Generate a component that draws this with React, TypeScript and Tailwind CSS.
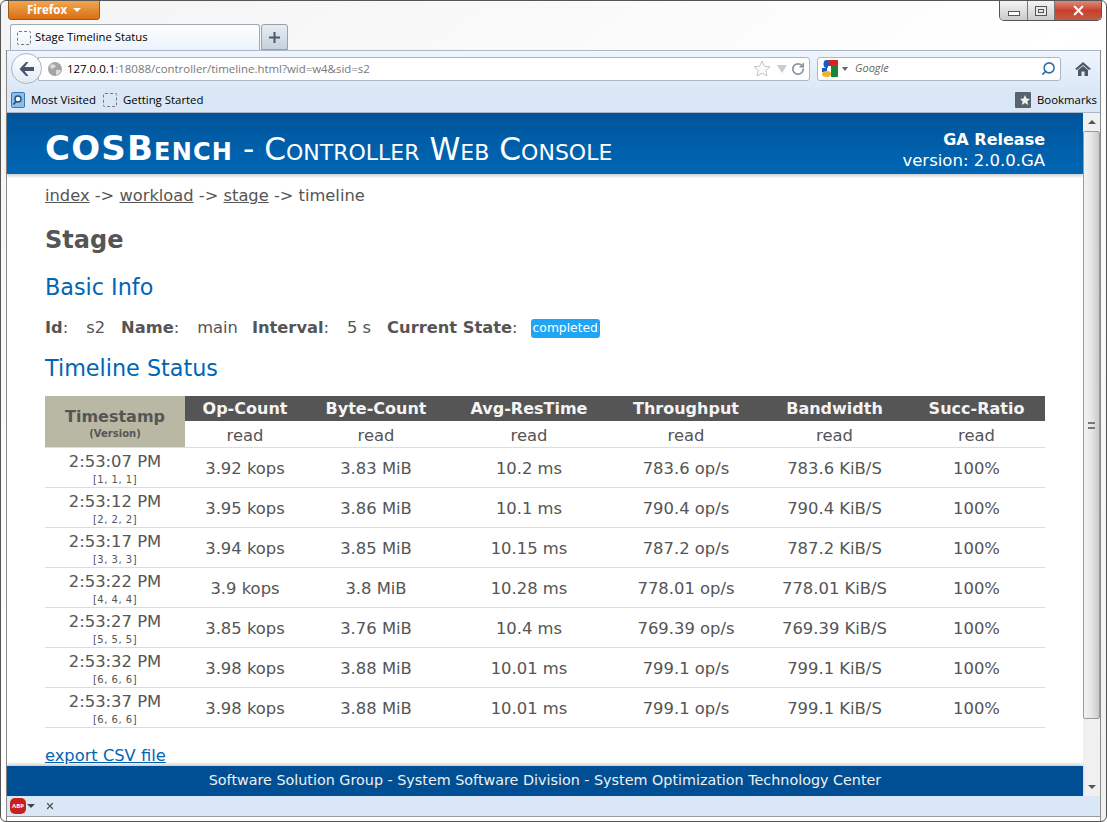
import { RotateCw, Search, X } from "lucide-react";

const chromeFont = "font-['Open_Sans','Noto_Sans',sans-serif]";
const pageFont = "font-['DejaVu_Sans','Liberation_Sans',sans-serif]";

const columns = [
  { name: "Op-Count", width: "w-[120px]" },
  { name: "Byte-Count", width: "w-[142px]" },
  { name: "Avg-ResTime", width: "w-[164px]" },
  { name: "Throughput", width: "w-[150px]" },
  { name: "Bandwidth", width: "w-[147px]" },
  { name: "Succ-Ratio", width: "w-[137px]" },
];

const rows = [
  ["2:53:07 PM", "[1, 1, 1]", "3.92 kops", "3.83 MiB", "10.2 ms", "783.6 op/s", "783.6 KiB/S", "100%"],
  ["2:53:12 PM", "[2, 2, 2]", "3.95 kops", "3.86 MiB", "10.1 ms", "790.4 op/s", "790.4 KiB/S", "100%"],
  ["2:53:17 PM", "[3, 3, 3]", "3.94 kops", "3.85 MiB", "10.15 ms", "787.2 op/s", "787.2 KiB/S", "100%"],
  ["2:53:22 PM", "[4, 4, 4]", "3.9 kops", "3.8 MiB", "10.28 ms", "778.01 op/s", "778.01 KiB/S", "100%"],
  ["2:53:27 PM", "[5, 5, 5]", "3.85 kops", "3.76 MiB", "10.4 ms", "769.39 op/s", "769.39 KiB/S", "100%"],
  ["2:53:32 PM", "[6, 6, 6]", "3.98 kops", "3.88 MiB", "10.01 ms", "799.1 op/s", "799.1 KiB/S", "100%"],
  ["2:53:37 PM", "[6, 6, 6]", "3.98 kops", "3.88 MiB", "10.01 ms", "799.1 op/s", "799.1 KiB/S", "100%"],
];

function DashedIcon() {
  return <span className="block h-[14px] w-[14px] rounded-[2px] border border-dashed border-[#777]" />;
}

function WindowButtons() {
  return (
    <div className="mr-[4px] flex h-[20px] overflow-hidden rounded-b-[5px] border border-t-0 border-[#555]">
      <div className="flex w-[28px] items-end justify-center border-r border-[#777] bg-gradient-to-b from-[#f4f4f4] to-[#c9cbce] pb-[4px]">
        <span className="block h-[5px] w-[12px] border border-[#555] bg-white" />
      </div>
      <div className="flex w-[27px] items-center justify-center border-r border-[#777] bg-gradient-to-b from-[#f4f4f4] to-[#c9cbce]">
        <span className="block h-[10px] w-[12px] border border-[#555] bg-[#e8e8e8] p-[2px]">
          <span className="block h-full w-full border border-[#555]" />
        </span>
      </div>
      <div className="flex w-[46px] items-center justify-center bg-gradient-to-b from-[#dc8a7c] via-[#c8402c] to-[#c25a48]">
        <X size={15} strokeWidth={3.5} className="text-white" />
      </div>
    </div>
  );
}

function BackButton() {
  return (
    <div className="z-10 -ml-[1px] flex h-[31px] w-[31px] shrink-0 items-center justify-center rounded-full border border-[#a8b4c2] bg-gradient-to-b from-white to-[#e4ebf3]">
      <svg width="18" height="16" viewBox="0 0 18 16">
        <path d="M8 1 L1.5 8 L8 15 L10.5 15 L6.5 10 L16 10 L16 6 L6.5 6 L10.5 1 Z" fill="#47546a" />
      </svg>
    </div>
  );
}

function GoogleIcon() {
  return (
    <svg width="16" height="17" viewBox="0 0 16 17">
      <rect x="5" y="0" width="11" height="6" fill="#e0201c" />
      <rect x="9" y="5" width="7" height="12" fill="#17853a" />
      <ellipse cx="4.5" cy="4" rx="3" ry="4" fill="#1a5fc0" />
      <rect x="0" y="8" width="5" height="4" fill="#1a5fc0" />
      <ellipse cx="4.5" cy="14" rx="4.5" ry="3" fill="#f0b41c" />
      <rect x="6" y="6" width="3" height="5" fill="#fff" />
    </svg>
  );
}

function Toolbar() {
  return (
    <div className={`flex h-[37px] items-center bg-gradient-to-b from-[#eef5fd] to-[#dde9f7] pb-[2px] pl-[5px] ${chromeFont}`}>
      <BackButton />
      <div className="-ml-[4px] flex h-[24px] w-[772px] items-center rounded-r-[3px] border border-[#a9b7c9] bg-white pl-[8px] pr-[4px]">
        <svg width="16" height="16" viewBox="0 0 16 16" className="shrink-0">
          <circle cx="8" cy="8" r="7" fill="#a5a5a5" />
          <path d="M3 4 Q7 2 9 5 Q7 8 4 8 Z M9 9 Q13 8 14 10 Q12 14 9 14 Z" fill="#dcdcdc" />
        </svg>
        <span className="ml-[4px] text-[11.45px] text-[#777]">
          <span className="text-black">127.0.0.1</span>:18088/controller/timeline.html?wid=w4&amp;sid=s2
        </span>
        <div className="ml-auto flex items-center gap-[4px]">
          <svg width="18" height="17" viewBox="0 0 18 17">
            <path d="M9 1 L11.4 6.2 L17 6.8 L12.8 10.5 L14 16 L9 13.2 L4 16 L5.2 10.5 L1 6.8 L6.6 6.2 Z" fill="#fafafa" stroke="#c4c4c4" />
          </svg>
          <svg width="10" height="8" viewBox="0 0 10 8" className="ml-[2px]">
            <path d="M0 0 H10 L5 8 Z" fill="#c5ccd4" />
          </svg>
          <RotateCw size={14} strokeWidth={3} className="text-[#8c979f]" />
        </div>
      </div>
      <div className="ml-[7px] flex h-[24px] w-[244px] items-center rounded-[3px] border border-[#a9b7c9] bg-white px-[4px]">
        <GoogleIcon />
        <svg width="6" height="4" viewBox="0 0 6 4" className="ml-[4px]">
          <path d="M0 0 H6 L3 4 Z" fill="#666" />
        </svg>
        <span className="ml-[7px] text-[11px] italic text-[#666]">Google</span>
        <Search size={15} strokeWidth={2.5} className="ml-auto -scale-x-100 text-[#2f6fa8]" />
      </div>
      <svg width="16" height="14" viewBox="0 0 16 14" className="ml-[14px]">
        <path d="M8 0 L16 7 L14 8 L8 3 L2 8 L0 7 Z M3 8 L8 4 L13 8 V14 H9.5 V9.5 H6.5 V14 H3 Z" fill="#4b5966" />
      </svg>
    </div>
  );
}

function BookmarksBar() {
  return (
    <div className={`flex h-[25px] items-center border-b border-[#a9b7c9] bg-[#d9e7f7] pl-[4px] pr-[3px] text-[11.4px] text-black ${chromeFont}`}>
      <svg width="14" height="16" viewBox="0 0 14 16">
        <rect x="0.5" y="0.5" width="13" height="15" rx="1" fill="#8fbce6" stroke="#3a78b0" />
        <circle cx="7" cy="7" r="3" fill="#fff" stroke="#1f4f80" strokeWidth="1.4" />
        <path d="M5 9.5 L2.5 12.5" stroke="#1f4f80" strokeWidth="1.6" />
      </svg>
      <span className="ml-[6px]">Most Visited</span>
      <span className="ml-[7px]">
        <DashedIcon />
      </span>
      <span className="ml-[6px]">Getting Started</span>
      <svg width="16" height="16" viewBox="0 0 16 16" className="ml-auto">
        <rect width="16" height="16" rx="1" fill="#59636e" />
        <path d="M10 3 L11.5 6.5 L15 7 L12.4 9.3 L13.2 13 L10 11 L6.8 13 L7.6 9.3 L5 7 L8.5 6.5 Z" fill="#f2f2f2" />
      </svg>
      <span className="ml-[6px]">Bookmarks</span>
    </div>
  );
}

function Scrollbar() {
  return (
    <div className="flex w-[17px] shrink-0 flex-col bg-[#f0f0f0]">
      <div className="flex h-[18px] items-center justify-center">
        <span className="block h-0 w-0 border-x-[4px] border-b-[4px] border-x-transparent border-b-[#555]" />
      </div>
      <div className="flex h-[588px] items-center justify-center rounded-[2px] border border-[#9a9a9a] bg-gradient-to-r from-[#f2f2f2] via-[#e6e6e6] to-[#c9c9c9]">
        <span className="block h-[7px] w-[7px] border-y-2 border-[#777]" />
      </div>
      <div className="mt-auto flex h-[18px] items-center justify-center">
        <span className="block h-0 w-0 border-x-[4px] border-t-[4px] border-x-transparent border-t-[#555]" />
      </div>
    </div>
  );
}

function Field({ label, value, gap }: { label: string; value: string; gap: string }) {
  return (
    <span className={`${gap} whitespace-nowrap`}>
      <b className="font-bold">{label}</b>:<span className="ml-[18px]">{value}</span>
    </span>
  );
}

function TimelineTable() {
  return (
    <table className="w-[1000px] table-fixed border-collapse text-center text-[16.4px] leading-[20px] text-[#555]">
      <thead>
        <tr className="h-[25px]">
          <th rowSpan={2} className="w-[140px] bg-[#b8b8a4] p-0 pt-[5px] align-middle font-bold leading-none">
            <div className="text-[16px]">Timestamp</div>
            <div className="mt-[4px] text-[10px]">(Version)</div>
          </th>
          {columns.map((col) => (
            <th key={col.name} className={`${col.width} bg-[#555] p-0 text-[16px] font-bold text-[#f4f4f4]`}>
              {col.name}
            </th>
          ))}
        </tr>
        <tr className="h-[26px] border-b border-[#ddd]">
          {columns.map((col) => (
            <td key={col.name} className="p-0 pt-[4px]">read</td>
          ))}
        </tr>
      </thead>
      <tbody>
        {rows.map((row) => (
          <tr key={row[0] + row[2]} className="h-[40px] border-b border-[#ddd]">
            <td className="p-0 pt-[5px] leading-none">
              <div className="text-[16.4px] leading-[18px]">{row[0]}</div>
              <div className="mt-[3px] text-[10px] leading-[12px] tracking-[0.5px]">{row[1]}</div>
            </td>
            {row.slice(2).map((cell, i) => (
              <td key={i} className="p-0 pt-[3px]">{cell}</td>
            ))}
          </tr>
        ))}
      </tbody>
    </table>
  );
}

function Page() {
  return (
    <div className={`flex min-w-0 flex-1 flex-col bg-white text-[#555] ${pageFont}`}>
      <header className="flex h-[61px] shrink-0 items-center justify-between bg-gradient-to-b from-[#00559b] to-[#0067b5] px-[38px] text-white shadow-[0_2px_3px_rgba(0,0,0,0.2)]">
        <h1 className="whitespace-nowrap pt-[10px] text-[31.25px] font-normal [font-variant:small-caps]">
          <b className="text-[34px] font-bold tracking-[1.2px]">COSBench</b> - Controller Web Console
        </h1>
        <div className="pt-[12px] text-right leading-[21px]">
          <div className="text-[16px] font-bold">GA Release</div>
          <div className="text-[16.5px]">version: 2.0.0.GA</div>
        </div>
      </header>

      <main className="min-h-0 flex-1 overflow-hidden px-[38px]">
        <p className="mt-[11px] h-[22px] text-[16.3px] leading-[22px]">
          <a className="underline">index</a> -&gt; <a className="underline">workload</a> -&gt;{" "}
          <a className="underline">stage</a> -&gt; timeline
        </p>
        <h2 className="mt-[18px] text-[24px] font-bold leading-[30px]">Stage</h2>
        <h3 className="mt-[17px] text-[22.3px] leading-[30px] text-[#0066b3]">Basic Info</h3>
        <div className="mt-[16px] flex h-[20px] items-center text-[16.3px]">
          <Field label="Id" value="s2" gap="" />
          <Field label="Name" value="main" gap="ml-[16px]" />
          <Field label="Interval" value="5 s" gap="ml-[14px]" />
          <Field label="Current State" value="" gap="ml-[16px]" />
          <span className="-ml-[5px] rounded-[3px] bg-[#1fa5f3] px-[2px] text-[12.3px] leading-[19px] text-white">completed</span>
        </div>
        <h3 className="mt-[15px] text-[22.3px] leading-[30px] text-[#0066b3]">Timeline Status</h3>
        <div className="mt-[13px]">
          <TimelineTable />
        </div>
        <a className="mt-[18px] block text-[16.3px] leading-[20px] text-[#0066b3] underline">export CSV file</a>
      </main>

      <footer className="z-10 flex h-[30px] shrink-0 items-center justify-center bg-[#004f94] text-[14.33px] text-[#f0f0f0] shadow-[0_-2px_3px_rgba(0,0,0,0.2)]">
        Software Solution Group - System Software Division - System Optimization Technology Center
      </footer>
    </div>
  );
}

export default function App() {
  return (
    <div className="flex h-[822px] w-[1107px] flex-col overflow-hidden rounded-[6px] border border-[#555] bg-gradient-to-br from-[#f4f4f4] via-white to-[#f0f0f0]">
      <div className="flex h-[23px] shrink-0 items-start justify-between pl-[7px]">
        <div className={`-mt-[1px] flex h-[20px] w-[92px] items-center justify-center gap-[6px] rounded-b-[3px] border border-[#9a5a10] bg-gradient-to-b from-[#f1a64c] to-[#d86f0e] text-[11.5px] font-bold text-white ${chromeFont}`}>
          Firefox
          <span className="block h-0 w-0 border-x-[4px] border-t-[4px] border-x-transparent border-t-white" />
        </div>
        <WindowButtons />
      </div>

      <div className={`flex h-[26px] shrink-0 items-end gap-[1px] pl-[9px] ${chromeFont}`}>
        <div className="z-10 flex h-[26px] w-[250px] items-center rounded-t-[3px] border border-b-0 border-[#a3a9b2] bg-gradient-to-b from-white to-[#eaf3fc] pl-[6px] text-[11.3px] text-black">
          <DashedIcon />
          <span className="ml-[4px]">Stage Timeline Status</span>
        </div>
        <div className="flex h-[26px] w-[27px] items-center justify-center rounded-t-[3px] border border-[#9aa0a8] bg-gradient-to-b from-[#e8edf3] to-[#c6d0dc] text-[#3f4d5f]">
          <svg width="11" height="11" viewBox="0 0 11 11">
            <path d="M4.5 0 H6.5 V4.5 H11 V6.5 H6.5 V11 H4.5 V6.5 H0 V4.5 H4.5 Z" fill="#4a586a" />
          </svg>
        </div>
      </div>

      <div className="mx-[5px] flex min-h-0 flex-1 flex-col border-x border-[#8a8a8a]">
        <div className="border-t border-[#a9b7c9]">
          <Toolbar />
        </div>
        <BookmarksBar />
        <div className="flex min-h-0 flex-1">
          <Page />
          <Scrollbar />
        </div>
        <div className={`flex h-[21px] shrink-0 items-center gap-[10px] border-b border-[#9a9a9a] bg-[#d9e7f7] pl-[3px] ${chromeFont}`}>
          <div className="flex items-center gap-[1px]">
            <span className="flex h-[16px] w-[16px] items-center justify-center rounded-[5px] bg-[#c8201c] text-[6px] font-bold leading-none text-white">
              ABP
            </span>
            <span className="block h-0 w-0 border-x-[4px] border-t-[4px] border-x-transparent border-t-[#444]" />
          </div>
          <X size={10} strokeWidth={3} className="text-[#555]" />
        </div>
        <div className="h-[4px] shrink-0 bg-white" />
      </div>
    </div>
  );
}
